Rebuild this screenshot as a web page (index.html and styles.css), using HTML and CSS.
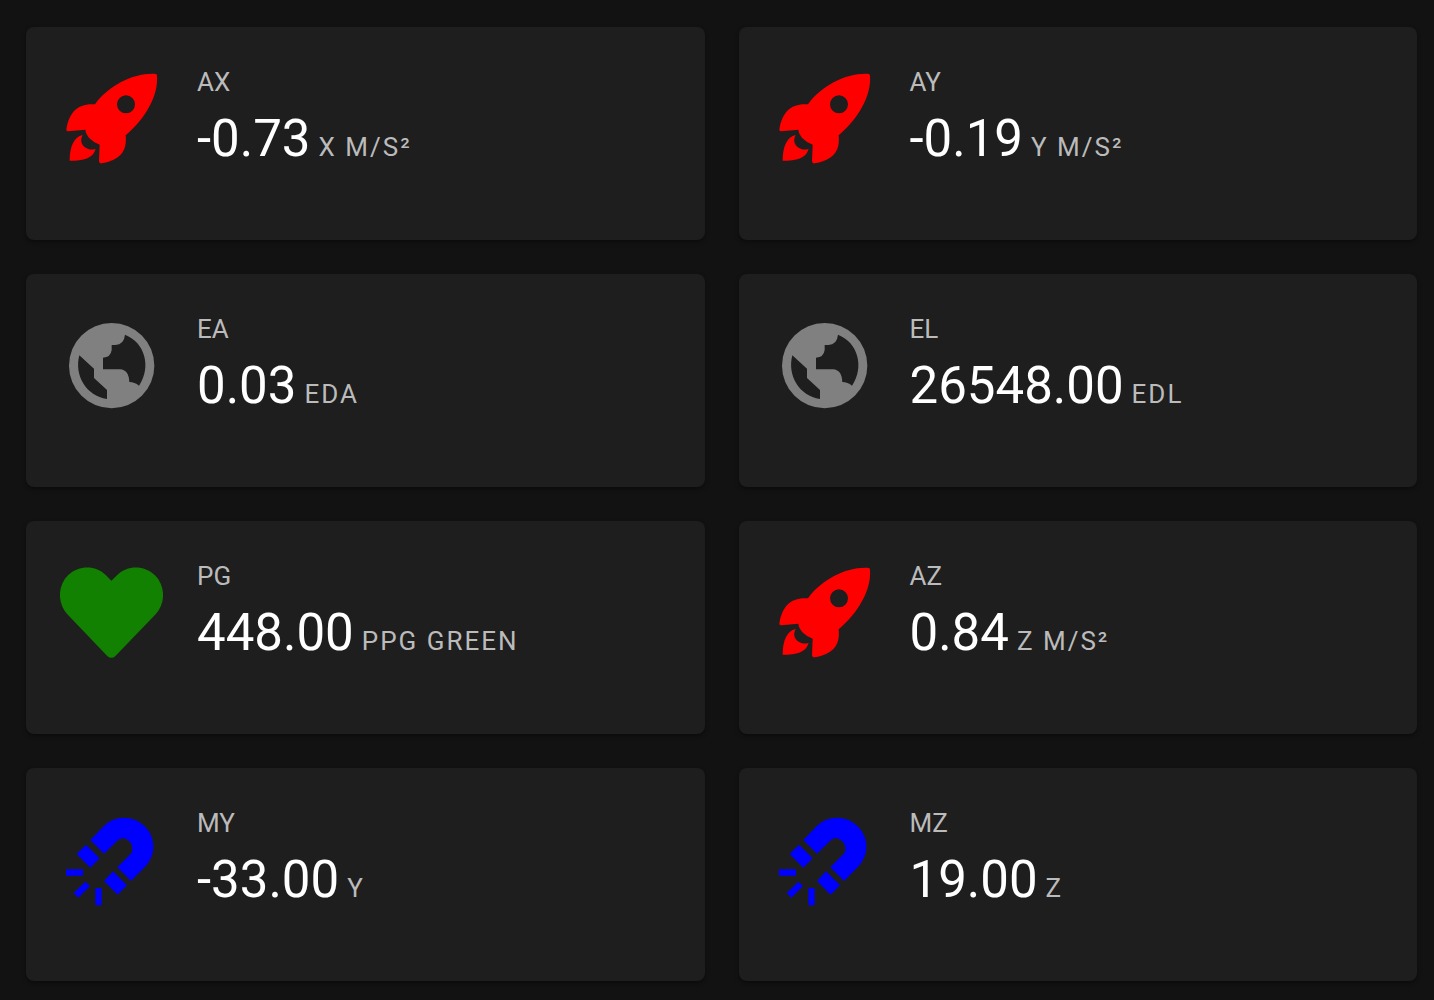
FILE: index.html
```html
<!DOCTYPE html>
<html lang="en">
<head>
    <meta charset="UTF-8">
    <meta name="viewport" content="width=device-width, initial-scale=1.0">
    <title>Sensor Dashboard</title>
    <link rel="stylesheet" href="styles.css">
</head>
<body>
    <svg class="icon-defs" aria-hidden="true">
        <symbol id="rocket" viewBox="30 34 309 309">
            <path fill-rule="evenodd" d="M318 55C255 50 178 87 135 146C84 142 57 169 49 222Q49 227 55 227L106 222Q107 236 120 249Q133 262 149 267L147 317Q148 324 155 323C208 314 232 290 227 239C283 191 326 122 321 60Q320 56 318 55ZM228 119A27 27 0 1 1 228 173A27 27 0 1 1 228 119Z"/>
            <path d="M98 238C72 243 59 273 59 315C100 315 130 308 137 279Q127 284 113 279C96 273 88 256 98 238Z"/>
        </symbol>
        <symbol id="earth" viewBox="30 26 309 309">
            <path fill-rule="evenodd" d="M185 53A128 128 0 1 1 185 309A128 128 0 1 1 185 53ZM225 88Q222 118 196 119H185V134Q182 156 159 157V192H210Q236 193 238 230Q254 230 267 241C305 185 285 111 225 88ZM88 150C72 211 109 272 171 281V254L132 218V190Z"/>
        </symbol>
        <symbol id="heart" viewBox="30 31 309 309">
            <path d="M184 90L168 74C137 43 87 43 54 74C22 106 22 157 52 191L171 315Q184 328 197 315L317 191C347 157 347 106 315 74C282 43 232 43 201 74Z"/>
        </symbol>
        <symbol id="magnet" viewBox="30 24 309 309">
            <path d="M121 120L161 79C195 45 249 45 284 79C319 113 319 167 284 202L243 243L202 202L241 163C262 139 227 98 202 122L162 161ZM108 134L149 175L121 203L80 162ZM189 214L231 256L203 284L162 243ZM48 208H99V227H48ZM106 245L120 258L85 293L71 279ZM136 264H155V316H136Z"/>
        </symbol>
    </svg>

    <main class="cards">
        <section class="card">
            <svg class="icon red" aria-hidden="true"><use href="#rocket"/></svg>
            <div class="stats">
                <div class="label">AX</div>
                <div class="reading"><span class="value">-0.73</span> <span class="unit">X M/S²</span></div>
            </div>
        </section>
        <section class="card">
            <svg class="icon red" aria-hidden="true"><use href="#rocket"/></svg>
            <div class="stats">
                <div class="label">AY</div>
                <div class="reading"><span class="value">-0.19</span> <span class="unit">Y M/S²</span></div>
            </div>
        </section>
        <section class="card">
            <svg class="icon grey" aria-hidden="true"><use href="#earth"/></svg>
            <div class="stats">
                <div class="label">EA</div>
                <div class="reading"><span class="value">0.03</span> <span class="unit">EDA</span></div>
            </div>
        </section>
        <section class="card">
            <svg class="icon grey" aria-hidden="true"><use href="#earth"/></svg>
            <div class="stats">
                <div class="label">EL</div>
                <div class="reading"><span class="value">26548.00</span> <span class="unit">EDL</span></div>
            </div>
        </section>
        <section class="card">
            <svg class="icon green" aria-hidden="true"><use href="#heart"/></svg>
            <div class="stats">
                <div class="label">PG</div>
                <div class="reading"><span class="value">448.00</span> <span class="unit">PPG GREEN</span></div>
            </div>
        </section>
        <section class="card">
            <svg class="icon red" aria-hidden="true"><use href="#rocket"/></svg>
            <div class="stats">
                <div class="label">AZ</div>
                <div class="reading"><span class="value">0.84</span> <span class="unit">Z M/S²</span></div>
            </div>
        </section>
        <section class="card">
            <svg class="icon blue" aria-hidden="true"><use href="#magnet"/></svg>
            <div class="stats">
                <div class="label">MY</div>
                <div class="reading"><span class="value">-33.00</span> <span class="unit">Y</span></div>
            </div>
        </section>
        <section class="card">
            <svg class="icon blue" aria-hidden="true"><use href="#magnet"/></svg>
            <div class="stats">
                <div class="label">MZ</div>
                <div class="reading"><span class="value">19.00</span> <span class="unit">Z</span></div>
            </div>
        </section>
    </main>
</body>
</html>
```
FILE: styles.css
```css
body {
    margin: 0;
    background-color: #121212;
    color: #fff;
    font-family: Roboto, sans-serif;
}
.icon-defs {
    display: none;
}
.cards {
    display: grid;
    grid-template-columns: 1fr 1fr;
    gap: 34px;
    padding: 27px 17px 18px 26px;
}
.card {
    display: flex;
    align-items: flex-start;
    gap: 34px;
    box-sizing: border-box;
    min-height: 213px;
    padding: 40px 34px;
    border-radius: 8px;
    background-color: #1e1e1e;
    box-shadow: 0 2px 4px rgba(0, 0, 0, 0.4);
}
.icon {
    flex: none;
    width: 103px;
    height: 103px;
    fill: currentColor;
}
.red {
    color: #f00;
}
.grey {
    color: #808080;
}
.green {
    color: #128000;
}
.blue {
    color: #00f;
}
.label {
    color: #bbb;
    font-size: 26px;
    line-height: 30px;
}
.reading {
    display: flex;
    align-items: baseline;
    gap: 8px;
    margin-top: 2px;
    line-height: 80px;
    white-space: nowrap;
}
.value {
    font-size: 51px;
}
.unit {
    color: #bbb;
    font-size: 26px;
    letter-spacing: 2px;
}
```
